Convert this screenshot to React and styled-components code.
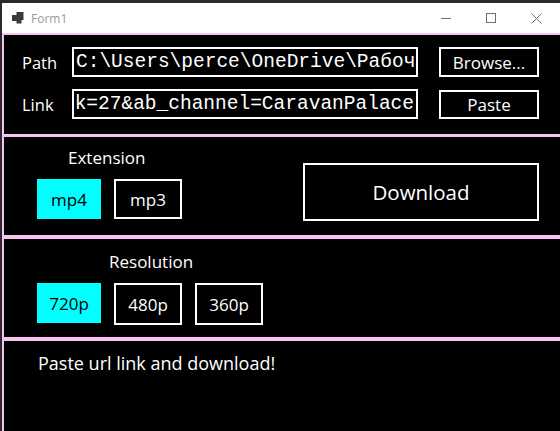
import { createGlobalStyle, styled } from "styled-components";

const colors = {
    pink: '#f8c3ee',
    cyan: '#00ffff',
    white: '#ffffff',
    titleText: '#9a9a9a',
    chrome: '#6f6f6f',
};

const GlobalStyle = createGlobalStyle`
    html, body { margin: 0; padding: 0; background: #2a2a2e; }
    body { font-family: 'Open Sans', 'Noto Sans', sans-serif; overflow: hidden; }
    * { box-sizing: border-box; }
`;

const Desktop = styled.div`
    width: 560px;
    height: 431px;
    padding: 3px 0 0 2px;
    background: #2a2a2e;
`;

const Window = styled.div`
    height: 428px;
    display: flex;
    flex-direction: column;
    background: #000;
`;

const TitleBar = styled.header`
    height: 30px;
    display: flex;
    align-items: center;
    background: ${ colors.white };
    padding-left: 10px;

    span {
        color: ${ colors.titleText };
        font-family: 'Open Sans', sans-serif;
        font-size: 12px;
        margin-left: 7px;
    }
`;

const Controls = styled.div`
    display: flex;
    margin-left: auto;
    height: 100%;
`;

const ControlButton = styled.div`
    width: 43px;
    height: 100%;
    display: flex;
    align-items: center;
    justify-content: center;
    margin-right: 2px;
`;

const Body = styled.main`
    flex: 1;
    border-left: 2px solid ${ colors.pink };
    display: flex;
    flex-direction: column;
`;

const Section = styled.section`
    border-top: ${ props => props.$line || 3 }px solid ${ colors.pink };
    height: ${ props => props.$h }px;
    display: flex;
    flex-direction: ${ props => props.$row ? 'row' : 'column' };
    flex-shrink: 0;
`;

const FieldRow = styled.div`
    display: flex;
    align-items: center;
    height: 30px;
    margin-top: ${ props => props.$top }px;
`;

const Label = styled.label`
    width: 68px;
    padding-left: 18px;
    color: ${ colors.white };
    font-size: 16.5px;
`;

const TextBox = styled.div`
    width: 346px;
    height: 30px;
    border: 2px solid ${ colors.white };
    color: ${ colors.white };
    font-family: 'Liberation Mono', 'DejaVu Sans Mono', monospace;
    font-size: 19.5px;
    line-height: 26px;
    white-space: nowrap;
    overflow: hidden;
    display: flex;
    justify-content: ${ props => props.$end ? 'flex-end' : 'flex-start' };
    padding: 0 2px 0 ${ props => props.$end ? 0 : 2 }px;
`;

const OutlineButton = styled.button`
    width: ${ props => props.$w }px;
    height: ${ props => props.$h }px;
    border: 2px solid ${ colors.white };
    background: ${ props => props.$active ? colors.cyan : '#000' };
    border-color: ${ props => props.$active ? colors.cyan : colors.white };
    color: ${ props => props.$active ? '#000' : colors.white };
    font-family: 'Open Sans', sans-serif;
    font-size: ${ props => props.$size || 17 }px;
    padding: 0;
    margin-left: ${ props => props.$ml || 0 }px;
    margin-top: ${ props => props.$mt || 0 }px;
`;

const Group = styled.div`
    display: flex;
    flex-direction: column;
`;

const GroupTitle = styled.div`
    color: ${ colors.white };
    font-size: 17px;
    height: 22px;
    line-height: 22px;
    margin: ${ props => props.$top }px 0 0 ${ props => props.$indent }px;
`;

const Options = styled.div`
    display: flex;
    gap: 13px;
    margin: 10px 0 0 33px;
`;

const Status = styled.p`
    margin: 10px 0 0 34px;
    color: ${ colors.white };
    font-size: 18px;
`;

function FormIcon() {
    return (
        <svg width="12" height="12" viewBox="0 0 12 12">
            <rect x="0" y="3" width="5" height="6" fill="#3a3a3a" />
            <rect x="4.5" y="0" width="7" height="8" fill="#3a3a3a" />
            <rect x="4.5" y="8" width="5" height="3.5" fill="#3a3a3a" />
        </svg>
    );
}

function App() {
    return (
        <>
            <GlobalStyle />
            <Desktop>
                <Window>
                    <TitleBar>
                        <FormIcon />
                        <span>Form1</span>
                        <Controls>
                            <ControlButton>
                                <svg width="11" height="11" viewBox="0 0 11 11"><line x1="0" y1="5.5" x2="10" y2="5.5" stroke={ colors.chrome } strokeWidth="1" /></svg>
                            </ControlButton>
                            <ControlButton>
                                <svg width="11" height="11" viewBox="0 0 11 11"><rect x="0.5" y="0.5" width="9" height="9" fill="none" stroke={ colors.chrome } strokeWidth="1" /></svg>
                            </ControlButton>
                            <ControlButton>
                                <svg width="11" height="11" viewBox="0 0 11 11"><path d="M0.5 0.5 L10.5 10.5 M10.5 0.5 L0.5 10.5" stroke={ colors.chrome } strokeWidth="1" /></svg>
                            </ControlButton>
                        </Controls>
                    </TitleBar>

                    <Body>
                        <Section $line={2} $h={101}>
                            <FieldRow $top={12}>
                                <Label>Path</Label>
                                <TextBox>C:\Users\perce\OneDrive\Рабоч</TextBox>
                                <OutlineButton $w={100} $h={30} $ml={21}>Browse...</OutlineButton>
                            </FieldRow>
                            <FieldRow $top={12}>
                                <Label>Link</Label>
                                <TextBox $end>k=27&amp;ab_channel=CaravanPalace</TextBox>
                                <OutlineButton $w={100} $h={29} $ml={21}>Paste</OutlineButton>
                            </FieldRow>
                        </Section>

                        <Section $h={101} $row>
                            <Group>
                                <GroupTitle $indent={64} $top={10}>Extension</GroupTitle>
                                <Options>
                                    <OutlineButton $w={64} $h={40} $active>mp4</OutlineButton>
                                    <OutlineButton $w={68} $h={40}>mp3</OutlineButton>
                                </Options>
                            </Group>
                            <OutlineButton $w={236} $h={58} $ml={121} $mt={26} $size={20.5}>Download</OutlineButton>
                        </Section>

                        <Section $line={4} $h={102}>
                            <GroupTitle $indent={105} $top={12}>Resolution</GroupTitle>
                            <Options>
                                <OutlineButton $w={64} $h={40} $active>720p</OutlineButton>
                                <OutlineButton $w={68} $h={42}>480p</OutlineButton>
                                <OutlineButton $w={68} $h={42}>360p</OutlineButton>
                            </Options>
                        </Section>

                        <Section $line={4} $h={90}>
                            <Status>Paste url link and download!</Status>
                        </Section>
                    </Body>
                </Window>
            </Desktop>
        </>
    );
};

export default App;
